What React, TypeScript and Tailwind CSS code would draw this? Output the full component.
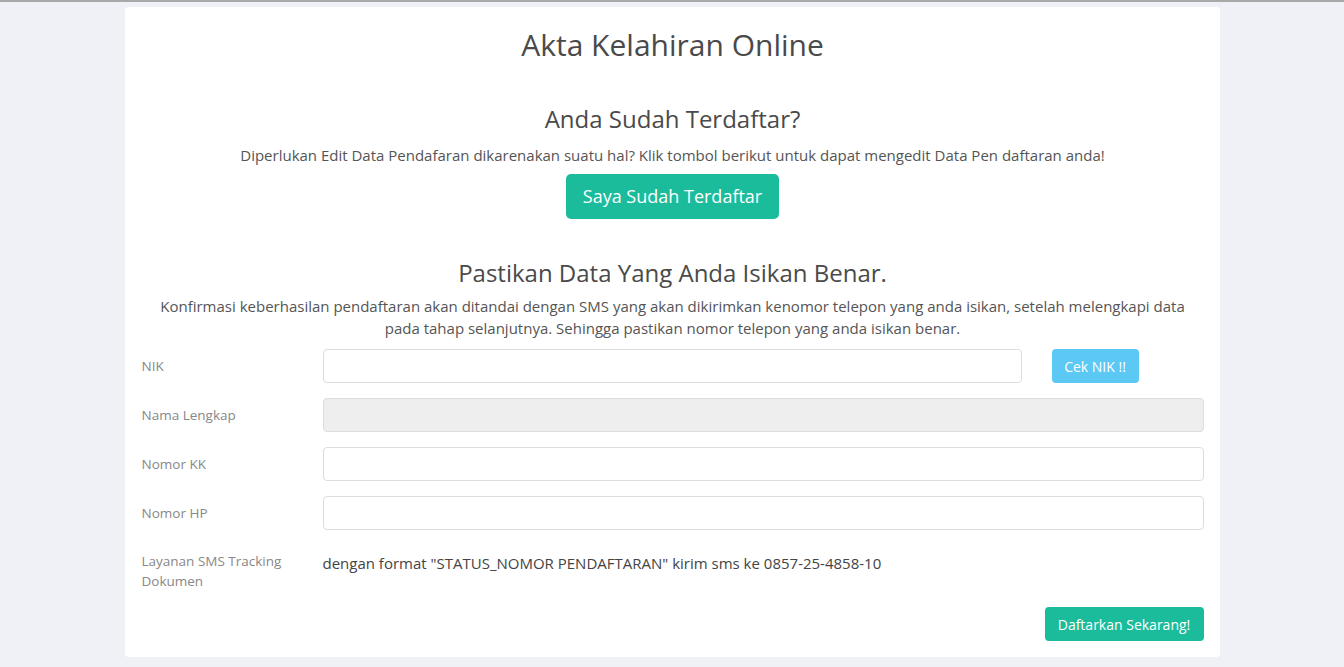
import React from 'react'

const font = { fontFamily: '"Open Sans", "Noto Sans", sans-serif' }

function Row({ label, children }: { label: React.ReactNode; children: React.ReactNode }) {
  return (
    <div className="flex items-start">
      <div className="w-[181px] shrink-0 pt-[7px] text-[13.5px] leading-[20px] text-[#888]">{label}</div>
      <div className="flex-1">{children}</div>
    </div>
  )
}

export default function App() {
  return (
    <div className="min-h-[667px] bg-[#f0f1f6] border-t-2 border-[#a9a9a9]" style={font}>
      <div className="mx-auto w-[1095px] pt-[5px]">
        <div className="bg-white rounded-[4px] pl-[17px] pr-[16px] pb-[16px] pt-[20px] text-[#555]">
          <h1 className="text-center text-[30px] leading-[36px] text-[#4a4a4a]">Akta Kelahiran Online</h1>

          <h2 className="mt-[41px] text-center text-[24px] leading-[30px] text-[#4a4a4a]">Anda Sudah Terdaftar?</h2>
          <p className="mt-[10px] text-center text-[15px] leading-[22px]">
            Diperlukan Edit Data Pendafaran dikarenakan suatu hal? Klik tombol berikut untuk dapat mengedit Data Pen daftaran anda!
          </p>
          <div className="mt-[8px] flex justify-center">
            <button className="h-[45px] w-[213px] rounded-[5px] bg-[#1abc9c] text-[18px] text-white">Saya Sudah Terdaftar</button>
          </div>

          <h2 className="mt-[39px] text-center text-[24px] leading-[30px] text-[#4a4a4a]">Pastikan Data Yang Anda Isikan Benar.</h2>
          <p className="mt-[7px] px-[10px] text-center text-[15px] leading-[22px]">
            Konfirmasi keberhasilan pendaftaran akan ditandai dengan SMS yang akan dikirimkan kenomor telepon yang anda isikan, setelah melengkapi data pada tahap selanjutnya. Sehingga pastikan nomor telepon yang anda isikan benar.
          </p>

          <div className="mt-[10px] flex flex-col gap-[15px]">
            <Row label="NIK">
              <div className="flex items-center">
                <input className="h-[34px] w-[699px] rounded-[4px] border border-[#ddd] bg-white outline-none" />
                <button className="ml-[30px] h-[34px] w-[87px] rounded-[4px] bg-[#5bc9f4] text-[14px] text-white">Cek NIK !!</button>
              </div>
            </Row>
            <Row label="Nama Lengkap">
              <input disabled className="h-[34px] w-[881px] rounded-[4px] border border-[#ddd] bg-[#eee] outline-none" />
            </Row>
            <Row label="Nomor KK">
              <input className="h-[34px] w-[881px] rounded-[4px] border border-[#ddd] bg-white outline-none" />
            </Row>
            <Row label="Nomor HP">
              <input className="h-[34px] w-[881px] rounded-[4px] border border-[#ddd] bg-white outline-none" />
            </Row>
            <div className="flex items-start">
              <div className="w-[181px] shrink-0 pt-[6px] text-[13.5px] leading-[20px] text-[#888]">Layanan SMS Tracking<br />Dokumen</div>
              <div className="pt-[7px] text-[15px] leading-[22px] text-[#444]">dengan format "STATUS_NOMOR PENDAFTARAN" kirim sms ke 0857-25-4858-10</div>
            </div>
          </div>

          <div className="mt-[16px] flex justify-end">
            <button className="h-[34px] w-[159px] rounded-[4px] bg-[#1abc9c] text-[14px] text-white">Daftarkan Sekarang!</button>
          </div>
        </div>
      </div>
    </div>
  )
}
